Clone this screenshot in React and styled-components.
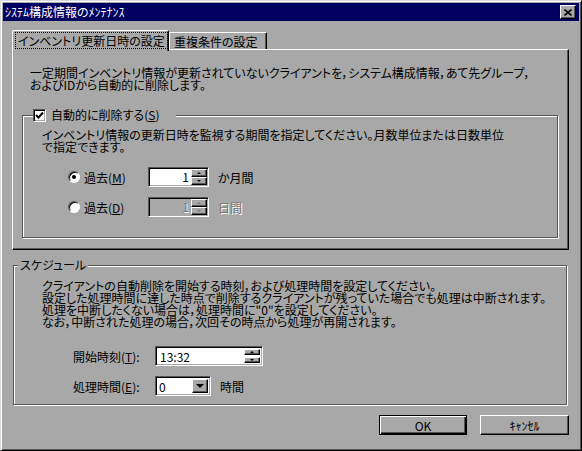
import React from 'react';
import styled, { createGlobalStyle, css } from 'styled-components';

const FACE = '#a8a8a8';
const SHADOW = '#555555';
const NAVY = '#000060';
const GRAYTEXT = '#787878';

const Global = createGlobalStyle`
  html, body { margin: 0; padding: 0; background: ${FACE}; }
  body {
    font-family: "Noto Sans CJK JP", "Noto Sans", sans-serif;
    font-size: 12px;
    color: #000;
    font-feature-settings: "palt";
  }
  * { box-sizing: border-box; }
`;

const raised = css`
  border-style: solid;
  border-width: 1px;
  border-color: #fff #000 #000 #fff;
  box-shadow: inset -1px -1px 0 ${SHADOW};
`;

const sunken = css`
  border-style: solid;
  border-width: 1px;
  border-color: ${SHADOW} #fff #fff ${SHADOW};
  box-shadow: inset 1px 1px 0 #000, inset -1px -1px 0 ${FACE};
`;

const Window = styled.div`
  width: 582px;
  height: 451px;
  background: ${FACE};
  border-style: solid;
  border-width: 1px;
  border-color: #d8d8d8 #000 #000 #d8d8d8;
  box-shadow: inset 1px 1px 0 #fff, inset -1px -1px 0 ${SHADOW};
  padding: 2px;
  display: flex;
  flex-direction: column;
`;

const TitleBar = styled.div`
  height: 18px;
  background: ${NAVY};
  display: flex;
  align-items: center;
  justify-content: space-between;
  padding: 0 3px 0 2px;
`;

const Title = styled.span`
  color: #fff;
  font-size: 12px;
  line-height: 18px;
  white-space: nowrap;
`;

const CloseButton = styled.div`
  width: 16px;
  height: 14px;
  background: ${FACE};
  ${raised};
  display: flex;
  align-items: center;
  justify-content: center;
`;

const Body = styled.div`
  display: flex;
  flex-direction: column;
  padding: 9px 10px 0 9px;
`;

const TabRow = styled.div`
  display: flex;
  align-items: flex-end;
  height: 21px;
  margin-bottom: -2px;
  position: relative;
  z-index: 1;
`;

const Tab = styled.div`
  background: ${FACE};
  border-top: 1px solid #fff;
  border-left: 1px solid #fff;
  border-right: 1px solid #000;
  box-shadow: inset -1px 0 0 ${SHADOW};
  border-top-left-radius: 2px;
  border-top-right-radius: 2px;
  display: flex;
  align-items: center;
  white-space: nowrap;
  height: ${p => (p.$active ? '21px' : '17px')};
  width: ${p => (p.$active ? '157px' : '98px')};
  margin-bottom: ${p => (p.$active ? '0' : '2px')};
  padding: ${p => (p.$active ? '0 0 2px 2px' : '0 0 0 4px')};
`;

const FocusText = styled.span`
  border: 1px dotted #000;
  padding: 1px 2px;
  line-height: 13px;
`;

const Panel = styled.div`
  height: 201px;
  border-style: solid;
  border-width: 1px;
  border-color: #fff #000 #000 #fff;
  box-shadow: inset -1px -1px 0 ${SHADOW};
  padding: 17px 10px 0 9px;
  display: flex;
  flex-direction: column;
`;

const Para = styled.p`
  margin: ${p => p.$m || '0'};
  line-height: 12px;
  white-space: nowrap;
`;

const GroupBox = styled.div`
  border: 1px solid ${SHADOW};
  box-shadow: inset 1px 1px 0 #fff, 1px 1px 0 #fff;
  display: flex;
  flex-direction: column;
  margin: ${p => p.$m || '0'};
  padding: ${p => p.$p || '0'};
`;

const Legend = styled.div`
  align-self: flex-start;
  height: 14px;
  margin: -8px 0 0 ${p => p.$ml || 0}px;
  padding: ${p => p.$pad || '0 2px'};
  background: ${FACE};
  display: flex;
  align-items: center;
  gap: 5px;
  line-height: 14px;
  white-space: nowrap;
`;

const CheckBox = styled.span`
  width: 13px;
  height: 13px;
  background: #fff;
  ${sunken};
  display: flex;
  align-items: center;
  justify-content: center;
`;

const OptionRow = styled.div`
  display: flex;
  align-items: center;
  height: 20px;
  margin: ${p => p.$m || '0'};
`;

const RadioLabel = styled.label`
  width: 80px;
  display: flex;
  align-items: center;
  gap: 4px;
  white-space: nowrap;
`;

const Radio = styled.span`
  width: 12px;
  height: 12px;
  border-radius: 50%;
  border: 1px solid;
  border-color: ${SHADOW} #fff #fff ${SHADOW};
  box-shadow: inset 1px 1px 0 #000;
  background: #fff;
  display: flex;
  align-items: center;
  justify-content: center;
`;

const Dot = styled.span`
  width: 4px;
  height: 4px;
  border-radius: 50%;
  background: #000;
`;

const Field = styled.div`
  display: flex;
  height: 20px;
  width: ${p => p.$w}px;
  background: ${p => (p.$disabled ? FACE : '#fff')};
  ${sunken};
  padding: ${p => p.$pad || '1px'};
  gap: ${p => p.$gap || 0}px;
`;

const FieldText = styled.span`
  flex: 1;
  line-height: 16px;
  padding: 0 ${p => (p.$right ? '2px' : '0')} 0 ${p => p.$pl || 1}px;
  text-align: ${p => (p.$right ? 'right' : 'left')};
  color: ${p => (p.$disabled ? GRAYTEXT : '#000')};
  text-shadow: ${p => (p.$disabled ? '1px 1px 0 #fff' : 'none')};
`;

const ArrowStack = styled.div`
  width: 16px;
  display: flex;
  flex-direction: column;
  gap: ${p => p.$gap || 0}px;
`;

const ArrowButton = styled.div`
  flex: 1;
  background: ${FACE};
  ${raised};
  display: flex;
  align-items: center;
  justify-content: center;
`;

const Tri = styled.span`
  width: 0;
  height: 0;
  border-left: ${p => p.$w}px solid transparent;
  border-right: ${p => p.$w}px solid transparent;
  ${p =>
    p.$dir === 'up'
      ? `border-bottom: ${p.$h}px solid ${p.$c || '#000'};`
      : `border-top: ${p.$h}px solid ${p.$c || '#000'};`}
`;

const Unit = styled.span`
  margin-left: 9px;
  white-space: nowrap;
  color: ${p => (p.$disabled ? GRAYTEXT : '#000')};
  text-shadow: ${p => (p.$disabled ? '1px 1px 0 #fff' : 'none')};
`;

const FieldLabel = styled.span`
  width: 82px;
  white-space: nowrap;
`;

const ButtonRow = styled.div`
  display: flex;
  justify-content: flex-end;
  gap: 13px;
  margin-top: 10px;
`;

const Button = styled.div`
  height: 20px;
  width: ${p => p.$w}px;
  background: ${FACE};
  display: flex;
  align-items: center;
  justify-content: center;
  ${p =>
    p.$default
      ? css`
          border: 1px solid #000;
          box-shadow: inset 1px 1px 0 #fff, inset -1px -1px 0 #000, inset -2px -2px 0 ${SHADOW};
        `
      : raised}
`;

const Spinner = ({ value, disabled }) => (
  <Field $w={61} $disabled={disabled}>
    <FieldText $right $disabled={disabled}>{value}</FieldText>
    <ArrowStack>
      <ArrowButton>
        <Tri $dir="up" $w={2} $h={2} $c={disabled ? GRAYTEXT : '#000'} />
      </ArrowButton>
      <ArrowButton>
        <Tri $dir="down" $w={2} $h={2} $c={disabled ? GRAYTEXT : '#000'} />
      </ArrowButton>
    </ArrowStack>
  </Field>
);

export default function App() {
  return (
    <>
      <Global />
      <Window>
        <TitleBar>
          <Title>ｼｽﾃﾑ構成情報のﾒﾝﾃﾅﾝｽ</Title>
          <CloseButton>
            <svg width="8" height="7" viewBox="0 0 8 7">
              <path d="M0.5 0.5 L7.5 6.5 M7.5 0.5 L0.5 6.5" stroke="#000" strokeWidth="1.6" />
            </svg>
          </CloseButton>
        </TitleBar>
        <Body>
          <TabRow>
            <Tab $active>
              <FocusText>インベントリ更新日時の設定</FocusText>
            </Tab>
            <Tab>重複条件の設定</Tab>
          </TabRow>
          <Panel>
            <Para $m="0 0 0 8px">
              一定期間インベントリ情報が更新されていないクライアントを，システム構成情報，あて先グループ，
              <br />
              およびIDから自動的に削除します。
            </Para>
            <GroupBox $m="24px 0 0 0" $p="0 0 20px 19px">
              <Legend $ml={-9} $pad="0 17px 0 0">
                <CheckBox>
                  <svg width="9" height="9" viewBox="0 0 9 9">
                    <path d="M1 4 L3.5 6.5 L8 1.5" stroke="#000" strokeWidth="2" fill="none" />
                  </svg>
                </CheckBox>
                <span>自動的に削除する(<u>S</u>)</span>
              </Legend>
              <Para $m="7px 0 0 0">
                インベントリ情報の更新日時を監視する期間を指定してください。月数単位または日数単位
                <br />
                で指定できます。
              </Para>
              <OptionRow $m="14px 0 0 26px">
                <RadioLabel>
                  <Radio><Dot /></Radio>
                  <span>過去(<u>M</u>)</span>
                </RadioLabel>
                <Spinner value="1" />
                <Unit>か月間</Unit>
              </OptionRow>
              <OptionRow $m="10px 0 0 26px">
                <RadioLabel>
                  <Radio />
                  <span>過去(<u>D</u>)</span>
                </RadioLabel>
                <Spinner value="1" disabled />
                <Unit $disabled>日間</Unit>
              </OptionRow>
            </GroupBox>
          </Panel>
          <GroupBox $m="15px 2px 0 1px" $p="0 0 8px 28px">
            <Legend $ml={-24}>スケジュール</Legend>
            <Para $m="8px 0 0 0">
              クライアントの自動削除を開始する時刻，および処理時間を設定してください。
              <br />
              設定した処理時間に達した時点で削除するクライアントが残っていた場合でも処理は中断されます。
              <br />
              処理を中断したくない場合は，処理時間に"0"を設定してください。
              <br />
              なお，中断された処理の場合，次回その時点から処理が再開されます。
            </Para>
            <OptionRow $m="18px 0 0 31px">
              <FieldLabel>開始時刻(<u>T</u>):</FieldLabel>
              <Field $w={108} $pad="2px 2px 2px 2px">
                <FieldText $pl={2}>13:32</FieldText>
                <ArrowStack $gap={2}>
                  <ArrowButton>
                    <Tri $dir="up" $w={2} $h={2} />
                  </ArrowButton>
                  <ArrowButton>
                    <Tri $dir="down" $w={2} $h={2} />
                  </ArrowButton>
                </ArrowStack>
              </Field>
            </OptionRow>
            <OptionRow $m="10px 0 0 31px">
              <FieldLabel>処理時間(<u>E</u>):</FieldLabel>
              <Field $w={56} $pad="2px 2px 2px 2px">
                <FieldText>0</FieldText>
                <ArrowStack>
                  <ArrowButton>
                    <Tri $dir="down" $w={4} $h={4} />
                  </ArrowButton>
                </ArrowStack>
              </Field>
              <Unit>時間</Unit>
            </OptionRow>
          </GroupBox>
          <ButtonRow>
            <Button $default $w={88}>OK</Button>
            <Button $w={89}>ｷｬﾝｾﾙ</Button>
          </ButtonRow>
        </Body>
      </Window>
    </>
  );
}
